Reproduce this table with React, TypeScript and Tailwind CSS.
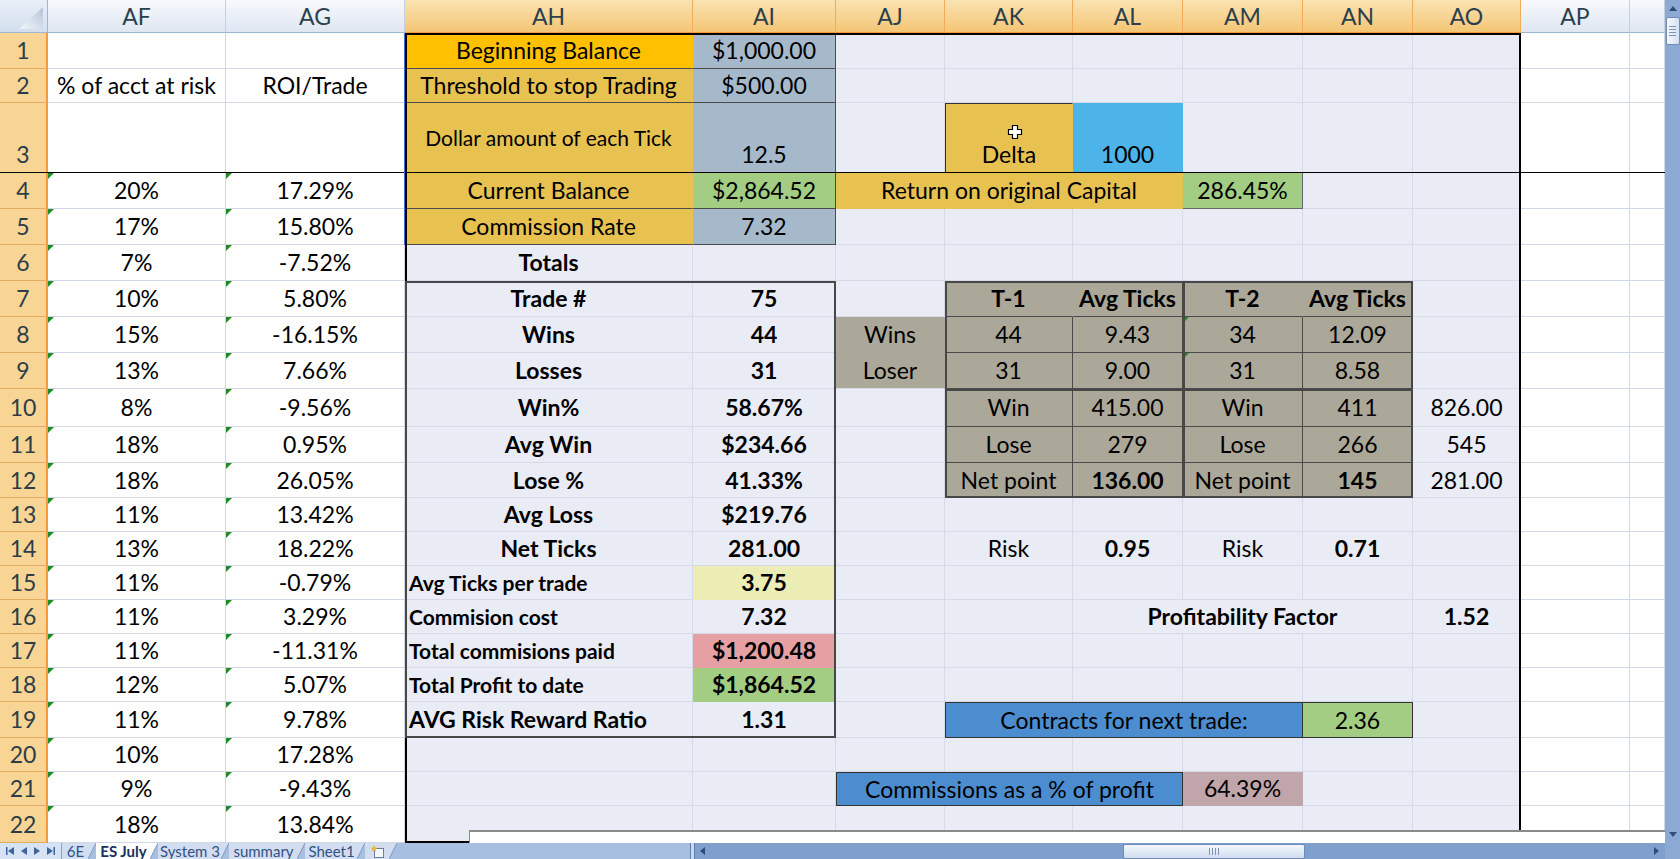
import React from 'react';
import { twMerge } from 'tailwind-merge';

type Def = { v?: React.ReactNode; cls?: string; span?: number; tri?: boolean; extra?: React.ReactNode };

const LETTERS = ['AF', 'AG', 'AH', 'AI', 'AJ', 'AK', 'AL', 'AM', 'AN', 'AO', 'AP', 'AQ'];

const COL_START = ['', 'col-start-1', 'col-start-2', 'col-start-3', 'col-start-4', 'col-start-5', 'col-start-6', 'col-start-7', 'col-start-8', 'col-start-9', 'col-start-10', 'col-start-11', 'col-start-12', 'col-start-13'];
const ROW_START = ['', 'row-start-1', 'row-start-2', 'row-start-3', 'row-start-4', 'row-start-5', 'row-start-6', 'row-start-7', 'row-start-8', 'row-start-9', 'row-start-10', 'row-start-11', 'row-start-12', 'row-start-13', 'row-start-14', 'row-start-15', 'row-start-16', 'row-start-17', 'row-start-18', 'row-start-19', 'row-start-20', 'row-start-21', 'row-start-22', 'row-start-23'];
const COL_SPAN = ['', 'col-span-1', 'col-span-2', 'col-span-3', 'col-span-4', 'col-span-5', 'col-span-6', 'col-span-7', 'col-span-8', 'col-span-9', 'col-span-10', 'col-span-11', 'col-span-12', 'col-span-13'];
const ROW_SPAN = ['', 'row-span-1', 'row-span-2', 'row-span-3', 'row-span-4', 'row-span-5', 'row-span-6', 'row-span-7', 'row-span-8', 'row-span-9', 'row-span-10', 'row-span-11', 'row-span-12', 'row-span-13', 'row-span-14', 'row-span-15', 'row-span-16', 'row-span-17', 'row-span-18', 'row-span-19', 'row-span-20', 'row-span-21', 'row-span-22'];

// fills
const ORANGE = 'bg-[#ffc000]';
const GOLD = 'bg-[#e8c251]';
const STEEL = 'bg-[#a6b9ca]';
const GREEN = 'bg-[#a3cd82]';
const SKY = 'bg-[#4db4e9]';
const BLUE = 'bg-[#4c8dd0]';
const TAUPE = 'bg-[#aca899]';
const MAUVE = 'bg-[#c0a6aa]';
const PINK = 'bg-[#e6a0a3]';
const PALE = 'bg-[#ececb5]';

const NOLINE = 'border-r-transparent border-b-transparent';
const DARKLINE = 'border-r-[#4a4a4a] border-b-[#4a4a4a]';
const BOXED = 'border-l border-t border-l-[#333] border-t-[#333] border-r-[#333] border-b-[#333]';
const BOTTOM = 'items-end pb-[1px]';
const SMALL_LABEL = 'font-bold justify-start pl-[4px] text-[21px]';

const Cursor = () => (
  <svg className="absolute left-[61px] top-[20px]" width="17" height="17" viewBox="0 0 17 17">
    <path d="M5.5 1.5h5v4h4v5h-4v4h-5v-4h-4v-5h4z" fill="#fff" stroke="#000" strokeWidth="1.2" />
  </svg>
);

const CELLS: Record<string, Def> = {
  AF2: { v: '% of acct at risk' },
  AG2: { v: 'ROI/Trade' },

  AH1: { v: 'Beginning Balance', cls: `${ORANGE} border-r-transparent border-b-[#4a4a4a]` },
  AI1: { v: '$1,000.00', cls: `${STEEL} ${DARKLINE}` },
  AH2: { v: 'Threshold to stop Trading', cls: `${GOLD} border-r-transparent border-b-[#4a4a4a]` },
  AI2: { v: '$500.00', cls: `${STEEL} ${DARKLINE}` },
  AH3: { v: 'Dollar amount of each Tick', cls: `${GOLD} border-r-transparent border-b-[#4a4a4a] text-[21px]` },
  AI3: { v: '12.5', cls: `${STEEL} ${DARKLINE} ${BOTTOM}` },
  AK3: { v: 'Delta', extra: <Cursor />, cls: `${GOLD} ${BOTTOM} border-l border-t border-l-[#333] border-t-[#333] border-r-transparent` },
  AL3: { v: '1000', cls: `${SKY} ${BOTTOM} border-r-transparent` },
  AH4: { v: 'Current Balance', cls: `${GOLD} border-r-transparent border-b-[#4a4a4a]` },
  AI4: { v: '$2,864.52', cls: `${GREEN} ${DARKLINE}` },
  AJ4: { v: 'Return on original Capital', span: 3, cls: `${GOLD} ${NOLINE}` },
  AM4: { v: '286.45%', cls: `${GREEN} border-r-[#666] border-b-[#666]` },
  AH5: { v: 'Commission Rate', cls: `${GOLD} border-r-transparent border-b-[#4a4a4a]` },
  AI5: { v: '7.32', cls: `${STEEL} ${DARKLINE}` },
  AH6: { v: 'Totals', cls: 'font-bold' },

  // totals box
  AH7: { v: 'Trade #', cls: 'font-bold' }, AI7: { v: '75', cls: 'font-bold' },
  AH8: { v: 'Wins', cls: 'font-bold' }, AI8: { v: '44', cls: 'font-bold' },
  AH9: { v: 'Losses', cls: 'font-bold' }, AI9: { v: '31', cls: 'font-bold' },
  AH10: { v: 'Win%', cls: 'font-bold' }, AI10: { v: '58.67%', cls: 'font-bold' },
  AH11: { v: 'Avg Win', cls: 'font-bold' }, AI11: { v: '$234.66', cls: 'font-bold' },
  AH12: { v: 'Lose %', cls: 'font-bold' }, AI12: { v: '41.33%', cls: 'font-bold' },
  AH13: { v: 'Avg Loss', cls: 'font-bold' }, AI13: { v: '$219.76', cls: 'font-bold' },
  AH14: { v: 'Net Ticks', cls: 'font-bold' }, AI14: { v: '281.00', cls: 'font-bold' },
  AH15: { v: 'Avg Ticks per trade', cls: SMALL_LABEL },
  AI15: { v: '3.75', cls: `font-bold ${PALE} ${NOLINE}` },
  AH16: { v: 'Commision cost', cls: SMALL_LABEL },
  AI16: { v: '7.32', cls: 'font-bold' },
  AH17: { v: 'Total commisions paid', cls: SMALL_LABEL },
  AI17: { v: '$1,200.48', cls: `font-bold ${PINK} ${NOLINE}` },
  AH18: { v: 'Total Profit to date', cls: SMALL_LABEL },
  AI18: { v: '$1,864.52', cls: `font-bold ${GREEN} ${NOLINE}` },
  AH19: { v: 'AVG Risk Reward Ratio', cls: 'font-bold justify-start pl-[4px]' },
  AI19: { v: '1.31', cls: 'font-bold' },

  // T-1 / T-2 table
  AK7: { v: 'T-1', cls: `font-bold ${TAUPE} border-r-[#aca899] border-b-[#4a4a4a]` },
  AL7: { v: 'Avg Ticks', cls: `font-bold ${TAUPE} ${DARKLINE}` },
  AM7: { v: 'T-2', cls: `font-bold ${TAUPE} border-r-[#aca899] border-b-[#4a4a4a]` },
  AN7: { v: 'Avg Ticks', cls: `font-bold ${TAUPE} ${DARKLINE}` },
  AJ8: { v: 'Wins', cls: `${TAUPE} ${NOLINE}` },
  AK8: { v: '44', cls: `${TAUPE} ${DARKLINE}` },
  AL8: { v: '9.43', cls: `${TAUPE} ${DARKLINE}` },
  AM8: { v: '34', tri: true, cls: `${TAUPE} ${DARKLINE}` },
  AN8: { v: '12.09', cls: `${TAUPE} ${DARKLINE}` },
  AJ9: { v: 'Loser', cls: `${TAUPE} border-r-transparent` },
  AK9: { v: '31', cls: `${TAUPE} ${DARKLINE}` },
  AL9: { v: '9.00', cls: `${TAUPE} ${DARKLINE}` },
  AM9: { v: '31', tri: true, cls: `${TAUPE} ${DARKLINE}` },
  AN9: { v: '8.58', cls: `${TAUPE} ${DARKLINE}` },
  AK10: { v: 'Win', cls: `${TAUPE} ${DARKLINE}` },
  AL10: { v: '415.00', cls: `${TAUPE} ${DARKLINE}` },
  AM10: { v: 'Win', cls: `${TAUPE} ${DARKLINE}` },
  AN10: { v: '411', cls: `${TAUPE} ${DARKLINE}` },
  AO10: { v: '826.00' },
  AK11: { v: 'Lose', cls: `${TAUPE} ${DARKLINE}` },
  AL11: { v: '279', cls: `${TAUPE} ${DARKLINE}` },
  AM11: { v: 'Lose', cls: `${TAUPE} ${DARKLINE}` },
  AN11: { v: '266', cls: `${TAUPE} ${DARKLINE}` },
  AO11: { v: '545' },
  AK12: { v: 'Net point', cls: `${TAUPE} ${DARKLINE}` },
  AL12: { v: '136.00', cls: `font-bold ${TAUPE} ${DARKLINE}` },
  AM12: { v: 'Net point', cls: `${TAUPE} ${DARKLINE}` },
  AN12: { v: '145', cls: `font-bold ${TAUPE} ${DARKLINE}` },
  AO12: { v: '281.00' },

  AK14: { v: 'Risk' },
  AL14: { v: '0.95', cls: 'font-bold' },
  AM14: { v: 'Risk' },
  AN14: { v: '0.71', cls: 'font-bold' },
  AL16: { v: 'Profitability Factor', span: 3, cls: 'font-bold' },
  AO16: { v: '1.52', cls: 'font-bold' },
  AK19: { v: 'Contracts for next trade:', span: 3, cls: `${BLUE} ${BOXED}` },
  AN19: { v: '2.36', cls: `${GREEN} border-t border-t-[#333] border-r-[#333] border-b-[#333]` },
  AJ21: { v: 'Commissions as a % of profit', span: 3, cls: `${BLUE} ${BOXED}` },
  AM21: { v: '64.39%', cls: `${MAUVE} ${NOLINE}` },
};

const RISK = ['20%', '17%', '7%', '10%', '15%', '13%', '8%', '18%', '18%', '11%', '13%', '11%', '11%', '11%', '12%', '11%', '10%', '9%', '18%'];
const ROI = ['17.29%', '15.80%', '-7.52%', '5.80%', '-16.15%', '7.66%', '-9.56%', '0.95%', '26.05%', '13.42%', '18.22%', '-0.79%', '3.29%', '-11.31%', '5.07%', '9.78%', '17.28%', '-9.43%', '13.84%'];
RISK.forEach((v, i) => {
  CELLS['AF' + (i + 4)] = { v, tri: true };
  CELLS['AG' + (i + 4)] = { v: ROI[i], tri: true };
});

// outlines drawn over the cells: [col, gridRow, colSpan, rowSpan, classes]
const FRAMES: [number, number, number, number, string][] = [
  [1, 4, 13, 1, 'border-b border-black'],
  [4, 2, 8, 22, 'border-2 border-black'],
  [4, 8, 2, 13, 'border-2 border-[#474747]'],
  [7, 8, 4, 6, 'border-2 border-[#474747]'],
  [9, 8, 2, 6, 'border-l-2 border-[#474747]'],
  [7, 11, 4, 3, 'border-t-2 border-[#474747]'],
];

const Tri = () => (
  <span className="absolute left-0 top-0 h-0 w-0 border-r-[6px] border-t-[6px] border-r-transparent border-t-[#1f8a26]" />
);

function Sheet() {
  const covered = new Set<string>();
  Object.entries(CELLS).forEach(([addr, d]) => {
    if (!d.span) return;
    const m = addr.match(/^([A-Z]+)(\d+)$/)!;
    const ci = LETTERS.indexOf(m[1]);
    for (let k = 1; k < d.span; k++) covered.add(LETTERS[ci + k] + m[2]);
  });

  const body: React.ReactNode[] = [];
  for (let r = 1; r <= 22; r++) {
    LETTERS.forEach((l, ci) => {
      const addr = l + r;
      if (covered.has(addr)) return;
      const d = CELLS[addr] ?? {};
      const sel = ci >= 2 && ci <= 9;
      body.push(
        <div
          key={addr}
          className={twMerge(
            'relative flex items-center justify-center whitespace-nowrap border-r border-b text-[23px] leading-normal text-black',
            sel ? 'bg-[#e9ebf5] border-r-[#d5d9e8] border-b-[#d5d9e8]' : 'bg-white border-r-[#d0d7e5] border-b-[#d0d7e5]',
            COL_START[ci + 2],
            ROW_START[r + 1],
            d.span ? COL_SPAN[d.span] : '',
            d.cls,
          )}
        >
          {d.tri && <Tri />}
          {d.extra}
          {d.v}
        </div>,
      );
    });
  }

  return (
    <div className="relative grid h-[843px] w-[1665px] grid-cols-[48px_178px_179px_288px_143px_109px_128px_110px_120px_110px_108px_109px_35px] grid-rows-[33px_36px_34px_70px_36px_36px_36px_36px_36px_36px_38px_36px_35px_34px_34px_34px_34px_34px_34px_36px_34px_34px_37px]">
      <div className="col-start-1 row-start-1 relative border-b border-r border-[#9eb6ce] bg-linear-to-b from-[#e9eff8] to-[#d3dfee]">
        <svg className="absolute inset-0" width="48" height="33" viewBox="0 0 48 33">
          <defs>
            <linearGradient id="cornerTri" x1="0" y1="1" x2="1" y2="0">
              <stop offset="0" stopColor="#f4f7fb" />
              <stop offset="1" stopColor="#b3c3d8" />
            </linearGradient>
          </defs>
          <polygon points="43,7 43,29 19,29" fill="url(#cornerTri)" />
        </svg>
      </div>
      {LETTERS.map((l, ci) => {
        const sel = ci >= 2 && ci <= 9;
        return (
          <div
            key={l}
            className={twMerge(
              'row-start-1 flex items-center justify-center text-[23px] text-[#2b3f4d]',
              COL_START[ci + 2],
              sel
                ? 'bg-linear-to-b from-[#fae3b2] to-[#f4c574] border-r border-r-[#f0ac57] border-b border-b-[#f29a3c]'
                : 'bg-linear-to-b from-[#f7f9fc] to-[#dee6f1] border-r border-r-[#c4d0e0] border-b border-b-[#9eb6ce]',
            )}
          >
            {l === 'AQ' ? '' : l}
          </div>
        );
      })}
      {Array.from({ length: 22 }, (_, i) => i + 1).map((r) => (
        <div
          key={'h' + r}
          className={twMerge(
            'col-start-1 flex items-center justify-center border-b border-r-2 border-b-[#e2ad60] border-r-[#f29a3c] bg-[#f8d594] text-[23px] text-[#2d3d48]',
            ROW_START[r + 1],
            r === 3 ? 'items-end pb-[1px]' : '',
          )}
        >
          {r}
        </div>
      ))}
      {body}
      {FRAMES.map(([c, r, cs, rs, cls], i) => (
        <div
          key={'f' + i}
          className={twMerge('pointer-events-none relative z-10', COL_START[c], ROW_START[r], COL_SPAN[cs], ROW_SPAN[rs], cls)}
        />
      ))}
      <div className="pointer-events-none absolute left-[404px] top-[33px] z-20 h-[212px] w-px bg-[#3b6fd6]" />
      <div className="absolute left-[469px] top-[830px] z-20 h-[13px] w-[1196px] border-l border-t-2 border-[#8a8a8a] bg-white" />
    </div>
  );
}

function VScroll() {
  return (
    <div className="flex h-[843px] w-[15px] flex-col items-center bg-[#8ca9d4]">
      <div className="flex h-[17px] items-center justify-center">
        <svg width="8" height="5" viewBox="0 0 8 5"><polygon points="4,0 8,5 0,5" fill="#2f4d7c" /></svg>
      </div>
      <div className="flex h-[28px] w-[14px] flex-col items-center justify-center gap-[2px] rounded-[2px] border border-[#6f8bb8] bg-linear-to-r from-[#f5f8fc] to-[#d4e0f0]">
        <span className="h-px w-[7px] bg-[#7b93b8]" />
        <span className="h-px w-[7px] bg-[#7b93b8]" />
        <span className="h-px w-[7px] bg-[#7b93b8]" />
        <span className="h-px w-[7px] bg-[#7b93b8]" />
      </div>
      <div className="flex-1" />
      <div className="flex h-[18px] items-center justify-center">
        <svg width="8" height="5" viewBox="0 0 8 5"><polygon points="0,0 8,0 4,5" fill="#2f4d7c" /></svg>
      </div>
    </div>
  );
}

const Tab = ({ label, w, active }: { label: React.ReactNode; w: string; active?: boolean }) => (
  <div
    className={twMerge(
      'relative flex h-full items-center justify-center pr-[7px]',
      w,
      active ? 'bg-white font-bold text-[#17325c]' : 'bg-[#d2def0] text-[#2f5287]',
    )}
  >
    {label}
    <svg className="absolute right-0 top-0" width="8" height="16" viewBox="0 0 8 16">
      <polygon points="0,16 8,0 8,16" fill="#a7bfe1" />
      <line x1="0" y1="16" x2="8" y2="0" stroke="#7f98bd" strokeWidth="1" />
    </svg>
  </div>
);

function TabBar() {
  return (
    <div className="flex h-[16px] w-[1680px] bg-[#a7bfe1] text-[15px] leading-[16px]">
      <div className="flex w-[62px] items-center justify-between bg-[#d6e3f4] px-[6px] border-r border-[#8aa3c8]">
        <svg width="8" height="8" viewBox="0 0 8 8"><rect x="0" y="0" width="1.5" height="8" fill="#3f6499" /><polygon points="8,0 8,8 2,4" fill="#3f6499" /></svg>
        <svg width="6" height="8" viewBox="0 0 6 8"><polygon points="6,0 6,8 0,4" fill="#3f6499" /></svg>
        <svg width="6" height="8" viewBox="0 0 6 8"><polygon points="0,0 0,8 6,4" fill="#3f6499" /></svg>
        <svg width="8" height="8" viewBox="0 0 8 8"><polygon points="0,0 0,8 6,4" fill="#3f6499" /><rect x="6.5" y="0" width="1.5" height="8" fill="#3f6499" /></svg>
      </div>
      <Tab label="6E" w="w-[34px]" />
      <Tab label="ES July" w="w-[62px]" active />
      <Tab label="System 3" w="w-[71px]" />
      <Tab label="summary" w="w-[76px]" />
      <Tab label="Sheet1" w="w-[60px]" />
      <Tab
        w="w-[32px]"
        label={
          <svg width="16" height="13" viewBox="0 0 16 13">
            <rect x="4.5" y="3.5" width="9" height="9" fill="#f3f6fb" stroke="#6a7f9e" />
            <polygon points="4,0 5,2.5 7.5,2.8 5.5,4.3 6.2,6.8 4,5.3 1.8,6.8 2.5,4.3 0.5,2.8 3,2.5" fill="#f0b429" />
          </svg>
        }
      />
      <div className="w-[293px]" />
      <div className="flex w-[975px] items-center bg-[#7f9fcc]">
        <div className="h-full w-[5px] border-x border-[#5e7dab] bg-[#c9d8ee]" />
        <div className="flex w-[14px] items-center justify-center">
          <svg width="5" height="8" viewBox="0 0 5 8"><polygon points="5,0 5,8 0,4" fill="#2f4d7c" /></svg>
        </div>
        <div className="w-[414px]" />
        <div className="flex h-[15px] w-[182px] items-center justify-center gap-[2px] rounded-[2px] border border-[#6f8bb8] bg-linear-to-b from-[#f5f8fc] to-[#cfdcef]">
          <span className="h-[7px] w-px bg-[#7b93b8]" />
          <span className="h-[7px] w-px bg-[#7b93b8]" />
          <span className="h-[7px] w-px bg-[#7b93b8]" />
          <span className="h-[7px] w-px bg-[#7b93b8]" />
        </div>
        <div className="flex-1" />
        <div className="flex w-[17px] items-center justify-center">
          <svg width="5" height="8" viewBox="0 0 5 8"><polygon points="0,0 0,8 5,4" fill="#2f4d7c" /></svg>
        </div>
      </div>
      <div className="w-[15px] bg-[#8ca9d4]" />
    </div>
  );
}

export default function App() {
  return (
    <div className="flex h-[859px] w-[1680px] flex-col overflow-hidden bg-white font-['Lato',sans-serif] text-black">
      <div className="flex h-[843px]">
        <Sheet />
        <VScroll />
      </div>
      <TabBar />
    </div>
  );
}
